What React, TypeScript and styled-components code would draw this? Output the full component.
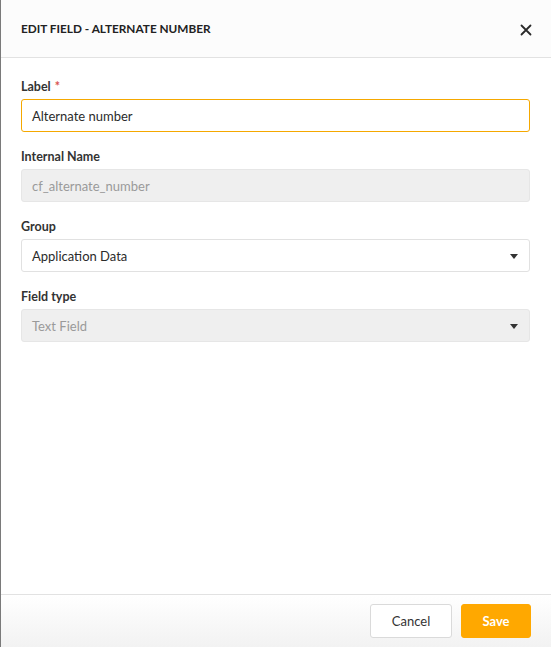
import React from "react";
import styled, { createGlobalStyle } from "styled-components";

const GlobalStyle = createGlobalStyle`
  html, body {
    margin: 0;
    padding: 0;
    background: #ffffff;
  }
  body {
    font-family: Lato, "Open Sans", "Liberation Sans", sans-serif;
    color: #2b2b2b;
  }
  * { box-sizing: border-box; }
`;

const Panel = styled.div`
  width: 551px;
  height: 647px;
  display: flex;
  flex-direction: column;
  border-left: 1px solid #7a7a7a;
  background: #ffffff;
`;

const Header = styled.div`
  height: 58px;
  flex-shrink: 0;
  display: flex;
  align-items: center;
  justify-content: space-between;
  padding: 0 17px 0 20px;
  background: #fcfcfc;
  border-bottom: 1px solid #e2e2e2;
`;

const Title = styled.h1`
  margin: 0;
  font-size: 11.8px;
  font-weight: 700;
  color: #222;
`;

const CloseButton = styled.button`
  border: 0;
  background: none;
  padding: 0;
  width: 16px;
  height: 16px;
  display: flex;
  align-items: center;
  justify-content: center;
  cursor: pointer;
  margin-top: 3px;
`;

const Body = styled.div`
  flex: 1;
  display: flex;
  flex-direction: column;
  gap: 18px;
  padding: 22px 20px 0 20px;
`;

const Field = styled.div`
  display: flex;
  flex-direction: column;
  gap: 5px;
`;

const Label = styled.label`
  font-size: 12.5px;
  font-weight: 700;
  color: #333;
  line-height: 14px;
`;

const Required = styled.span`
  color: #d9534f;
  margin-left: 4px;
`;

const Box = styled.div<{ $disabled?: boolean; $focused?: boolean }>`
  height: 33px;
  width: 509px;
  display: flex;
  align-items: center;
  justify-content: space-between;
  padding: 0 11px 0 10px;
  border: 1px solid ${(p) => (p.$focused ? "#f5a800" : p.$disabled ? "#e6e6e6" : "#e1e1e1")};
  border-radius: 3px;
  background: ${(p) => (p.$disabled ? "#efefef" : "#ffffff")};
  color: ${(p) => (p.$disabled ? "#9a9a9a" : "#2b2b2b")};
  font-size: 13px;
`;

const Caret = styled.span`
  width: 0;
  height: 0;
  border-left: 4px solid transparent;
  border-right: 4px solid transparent;
  border-top: 5px solid #333;
  margin-top: 2px;
`;

const Footer = styled.div`
  height: 53px;
  flex-shrink: 0;
  display: flex;
  align-items: center;
  justify-content: flex-end;
  gap: 9px;
  padding: 0 20px 0 0;
  border-top: 1px solid #e2e2e2;
  background: linear-gradient(#ffffff, #f2f2f2);
`;

const Button = styled.button<{ $primary?: boolean }>`
  height: 34px;
  border-radius: 3px;
  font-family: inherit;
  font-size: 13px;
  cursor: pointer;
  border: 1px solid ${(p) => (p.$primary ? "#ffa800" : "#dadada")};
  background: ${(p) => (p.$primary ? "#ffa800" : "#ffffff")};
  color: ${(p) => (p.$primary ? "#ffffff" : "#333")};
  font-weight: ${(p) => (p.$primary ? 700 : 400)};
  width: ${(p) => (p.$primary ? "70px" : "82px")};
`;

const CloseIcon = () => (
  <svg width="12" height="12" viewBox="0 0 12 12">
    <path d="M1.5 1.5 L10.5 10.5 M10.5 1.5 L1.5 10.5" stroke="#2a2a2a" strokeWidth="1.8" strokeLinecap="round" />
  </svg>
);

export default function App() {
  return (
    <>
      <GlobalStyle />
      <Panel>
        <Header>
          <Title>EDIT FIELD - ALTERNATE NUMBER</Title>
          <CloseButton aria-label="Close">
            <CloseIcon />
          </CloseButton>
        </Header>
        <Body>
          <Field>
            <Label>
              Label<Required>*</Required>
            </Label>
            <Box $focused>Alternate number</Box>
          </Field>
          <Field>
            <Label>Internal Name</Label>
            <Box $disabled>cf_alternate_number</Box>
          </Field>
          <Field>
            <Label>Group</Label>
            <Box>
              Application Data
              <Caret />
            </Box>
          </Field>
          <Field>
            <Label>Field type</Label>
            <Box $disabled>
              Text Field
              <Caret />
            </Box>
          </Field>
        </Body>
        <Footer>
          <Button>Cancel</Button>
          <Button $primary>Save</Button>
        </Footer>
      </Panel>
    </>
  );
}
